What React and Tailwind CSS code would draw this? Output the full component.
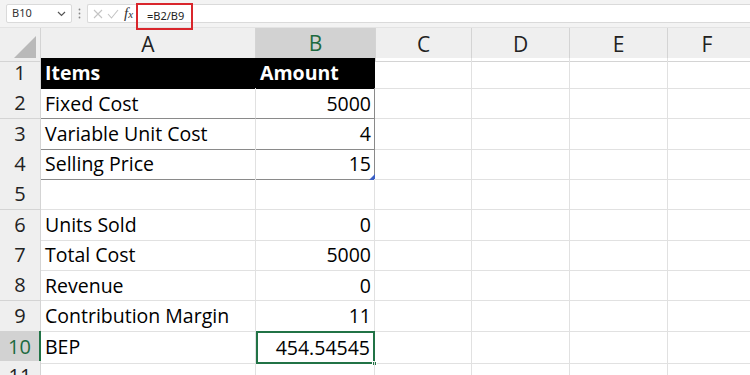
import React from "react";

const font = { fontFamily: "'Open Sans', 'Liberation Sans', sans-serif" };

const rows = [
  { n: 1, a: "Items", b: "Amount", head: true },
  { n: 2, a: "Fixed Cost", b: "5000", tb: true },
  { n: 3, a: "Variable Unit Cost", b: "4", tb: true },
  { n: 4, a: "Selling Price", b: "15", tb: true, handle: true },
  { n: 5, a: "", b: "" },
  { n: 6, a: "Units Sold", b: "0" },
  { n: 7, a: "Total Cost", b: "5000" },
  { n: 8, a: "Revenue", b: "0" },
  { n: 9, a: "Contribution Margin", b: "11" },
  { n: 10, a: "BEP", b: "454.54545", sel: true },
  { n: 11, a: "", b: "" },
];

function Row({ r }) {
  const rowH = "h-[30.33px]";
  return (
    <div className={`grid grid-cols-[41px_215px_119px_97px_98px_98px_1fr] ${rowH}`}>
      <div
        className={`flex items-center justify-center border-b border-r text-[20px] ${
          r.sel
            ? "bg-[#d2d2d2] text-[#1d6a40] border-r-[#217346] border-r-2 border-b-[#c6c6c6]"
            : "bg-[#efefef] text-[#222] border-[#d4d4d4]"
        }`}
      >
        {r.n}
      </div>
      <div
        className={`flex items-center pl-[4px] text-[19.5px] border-b ${
          r.head
            ? "bg-black text-white font-bold border-black"
            : r.tb
            ? "border-b-[#8a8a8a] border-r border-r-[#e1e1e1] text-black"
            : "border-[#e1e1e1] border-r text-black"
        }`}
      >
        {r.a}
      </div>
      <div
        className={`relative flex items-center text-[19.5px] ${
          r.head
            ? "bg-black text-white font-bold pl-[4px] border-b border-black"
            : r.tb
            ? "justify-end pr-[3px] border-b border-b-[#8a8a8a] border-r border-r-[#8a8a8a] text-black"
            : r.sel
            ? "justify-end pr-[3px] border-2 border-[#217346] text-black"
            : "justify-end pr-[3px] border-b border-r border-[#e1e1e1] text-black"
        }`}
      >
        {r.b}
        {r.handle && (
          <span className="absolute right-[-1px] bottom-[-1px] w-0 h-0 border-l-[6px] border-l-transparent border-b-[6px] border-b-[#3b5fc4]" />
        )}
        {r.sel && (
          <span className="absolute right-[-4px] bottom-[-4px] w-[5px] h-[5px] bg-[#217346] border border-white" />
        )}
      </div>
      <div className="border-b border-r border-[#e1e1e1]" />
      <div className="border-b border-r border-[#e1e1e1]" />
      <div className="border-b border-r border-[#e1e1e1]" />
      <div className="border-b border-[#e1e1e1]" />
    </div>
  );
}

export default function App() {
  return (
    <div className="w-[750px] h-[375px] overflow-hidden bg-white" style={font}>
      {/* Formula bar */}
      <div className="h-[28px] bg-[#f3f3f3] flex items-center pl-[6px] relative border-b border-[#e3e3e3]">
        <div className="w-[66px] h-[19px] bg-white border border-[#dadada] rounded-[2px] flex items-center justify-between px-[5px]">
          <span className="text-[11px] text-[#333]" style={{ fontFamily: "'Noto Sans', sans-serif" }}>B10</span>
          <svg width="9" height="6" viewBox="0 0 9 6">
            <path d="M1 1 L4.5 4.5 L8 1" fill="none" stroke="#555" strokeWidth="1.2" />
          </svg>
        </div>
        <div className="w-[15px] flex justify-center">
          <svg width="3" height="11" viewBox="0 0 3 11">
            <circle cx="1.5" cy="1.5" r="0.9" fill="#888" />
            <circle cx="1.5" cy="5.5" r="0.9" fill="#888" />
            <circle cx="1.5" cy="9.5" r="0.9" fill="#888" />
          </svg>
        </div>
        <div className="flex-1 h-[19px] bg-white border border-[#dadada] rounded-l-[2px] border-r-0 flex items-center">
          <div className="flex items-center gap-[4px] pl-[5px] w-[36px]">
            <svg width="10" height="10" viewBox="0 0 10 10">
              <path d="M1 1 L9 9 M9 1 L1 9" stroke="#c4c4c4" strokeWidth="1.1" />
            </svg>
            <svg width="12" height="10" viewBox="0 0 12 10">
              <path d="M1 5 L4.5 9 L11 1" fill="none" stroke="#c4c4c4" strokeWidth="1.1" />
            </svg>
          </div>
          <span className="italic text-[15px] text-[#333] leading-none" style={{ fontFamily: "'Liberation Serif', serif" }}>
            f<span className="text-[11px]">x</span>
          </span>
        </div>
        <div className="absolute left-[136px] top-[3px] w-[57px] h-[27px] border-2 border-[#d9262c] flex items-center pl-[9px]">
          <span className="text-[11px] text-[#222]" style={{ fontFamily: "'Noto Sans', sans-serif" }}>=B2/B9</span>
        </div>
      </div>
      {/* Column headers */}
      <div className="grid grid-cols-[41px_215px_119px_97px_98px_98px_1fr] h-[30px] bg-[#efefef] text-[21px] text-[#222]">
        <div className="relative border-r border-b border-[#d4d4d4]">
          <span className="absolute right-[4px] bottom-[3px] w-0 h-0 border-l-[22px] border-l-transparent border-b-[22px] border-b-[#b9b9b9]" />
        </div>
        <div className="flex items-center justify-center border-r border-b border-[#d4d4d4] border-b-black">A</div>
        <div className="flex items-center justify-center bg-[#d2d2d2] text-[#1d6a40] border-b-2 border-[#217346]">B</div>
        <div className="flex items-center justify-center border-r border-l border-b border-[#d4d4d4]">C</div>
        <div className="flex items-center justify-center border-r border-b border-[#d4d4d4]">D</div>
        <div className="flex items-center justify-center border-r border-b border-[#d4d4d4]">E</div>
        <div className="flex items-center justify-center border-b border-[#d4d4d4] pr-[4px]">F</div>
      </div>
      {rows.map((r) => (
        <Row key={r.n} r={r} />
      ))}
    </div>
  );
}
